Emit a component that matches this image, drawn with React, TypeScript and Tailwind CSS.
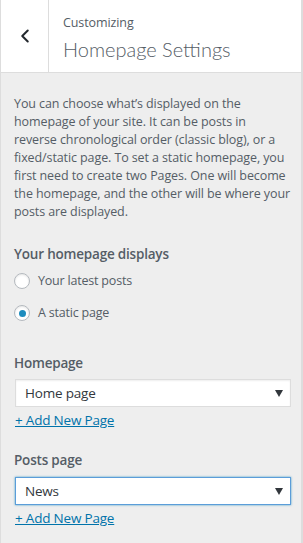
import { ChevronLeft } from "lucide-react";

const font = { fontFamily: '"Segoe UI", "Open Sans", "Noto Sans", sans-serif' };

function Radio({ label, checked }: { label: string; checked?: boolean }) {
  return (
    <label className="flex h-5 items-center gap-2 text-[12.5px] tracking-[-0.2px] text-[#555d66]">
      <span className="flex h-4 w-4 items-center justify-center rounded-full border border-[#b4b9be] bg-white shadow-[inset_0_1px_2px_rgba(0,0,0,0.1)]">
        {checked && <span className="h-[7px] w-[7px] rounded-full bg-[#1e8cbe]" />}
      </span>
      <span>{label}</span>
    </label>
  );
}

function SelectBox({ value, focused }: { value: string; focused?: boolean }) {
  return (
    <div
      className={`flex h-7 items-center justify-between bg-white pl-[9px] pr-[7px] text-[13.5px] tracking-[-0.2px] text-[#32373c] ${
        focused
          ? "border border-[#5b9dd9] shadow-[0_0_2px_rgba(30,140,190,0.8)]"
          : "border border-[#ddd] shadow-[inset_0_1px_2px_rgba(0,0,0,0.07)]"
      }`}
    >
      <span>{value}</span>
      <svg width="8" height="7" viewBox="0 0 8 7">
        <path d="M0 0h8L4 7z" fill="#32373c" />
      </svg>
    </div>
  );
}

export default function App() {
  return (
    <div style={font} className="h-[543px] w-[303px] border-l border-r-2 border-[#ddd] bg-[#eee]">
      <div className="flex h-[73px] border-b border-[#ddd] bg-white">
        <button className="flex w-12 items-center justify-center border-r border-[#ddd] text-[#23282d]">
          <ChevronLeft size={22} strokeWidth={2.2} />
        </button>
        <div className="pl-[14px] pt-[14px] text-[#555d66]">
          <div className="text-[12.5px] leading-[18px] tracking-[-0.1px]">Customizing</div>
          <div
            style={{ fontFamily: 'Lato, "Open Sans", sans-serif' }}
            className="mt-[4px] text-[20px] font-light leading-[26px]"
          >
            Homepage Settings
          </div>
        </div>
      </div>

      <div className="pl-[13px] pr-[10px] pt-[22px]">
        <p className="whitespace-nowrap text-[12.5px] leading-[18px] tracking-[-0.1px] text-[#555d66]">
          You can choose what’s displayed on the
          <br />
          homepage of your site. It can be posts in
          <br />
          reverse chronological order (classic blog), or a
          <br />
          fixed/static page. To set a static homepage, you
          <br />
          first need to create two Pages. One will become
          <br />
          the homepage, and the other will be where your
          <br />
          posts are displayed.
        </p>

        <div className="mt-[23px] text-[13.5px] font-semibold leading-[20px] tracking-[-0.2px] text-[#555d66]">
          Your homepage displays
        </div>
        <div className="mt-[7px] flex flex-col gap-[12px]">
          <Radio label="Your latest posts" />
          <Radio label="A static page" checked />
        </div>

        <div className="mt-[30px] text-[13.5px] font-semibold leading-[20px] tracking-[-0.2px] text-[#555d66]">
          Homepage
        </div>
        <div className="mt-[6px] ml-px">
          <SelectBox value="Home page" />
        </div>
        <a className="ml-px mt-[3px] block text-[13.5px] leading-[20px] tracking-[-0.2px] text-[#0073aa] underline">
          + Add New Page
        </a>

        <div className="mt-[20px] text-[13.5px] font-semibold leading-[20px] tracking-[-0.2px] text-[#555d66]">
          Posts page
        </div>
        <div className="mt-[7px] ml-px">
          <SelectBox value="News" focused />
        </div>
        <a className="ml-px mt-[3px] block text-[13.5px] leading-[20px] tracking-[-0.2px] text-[#0073aa] underline">
          + Add New Page
        </a>
      </div>
    </div>
  );
}
